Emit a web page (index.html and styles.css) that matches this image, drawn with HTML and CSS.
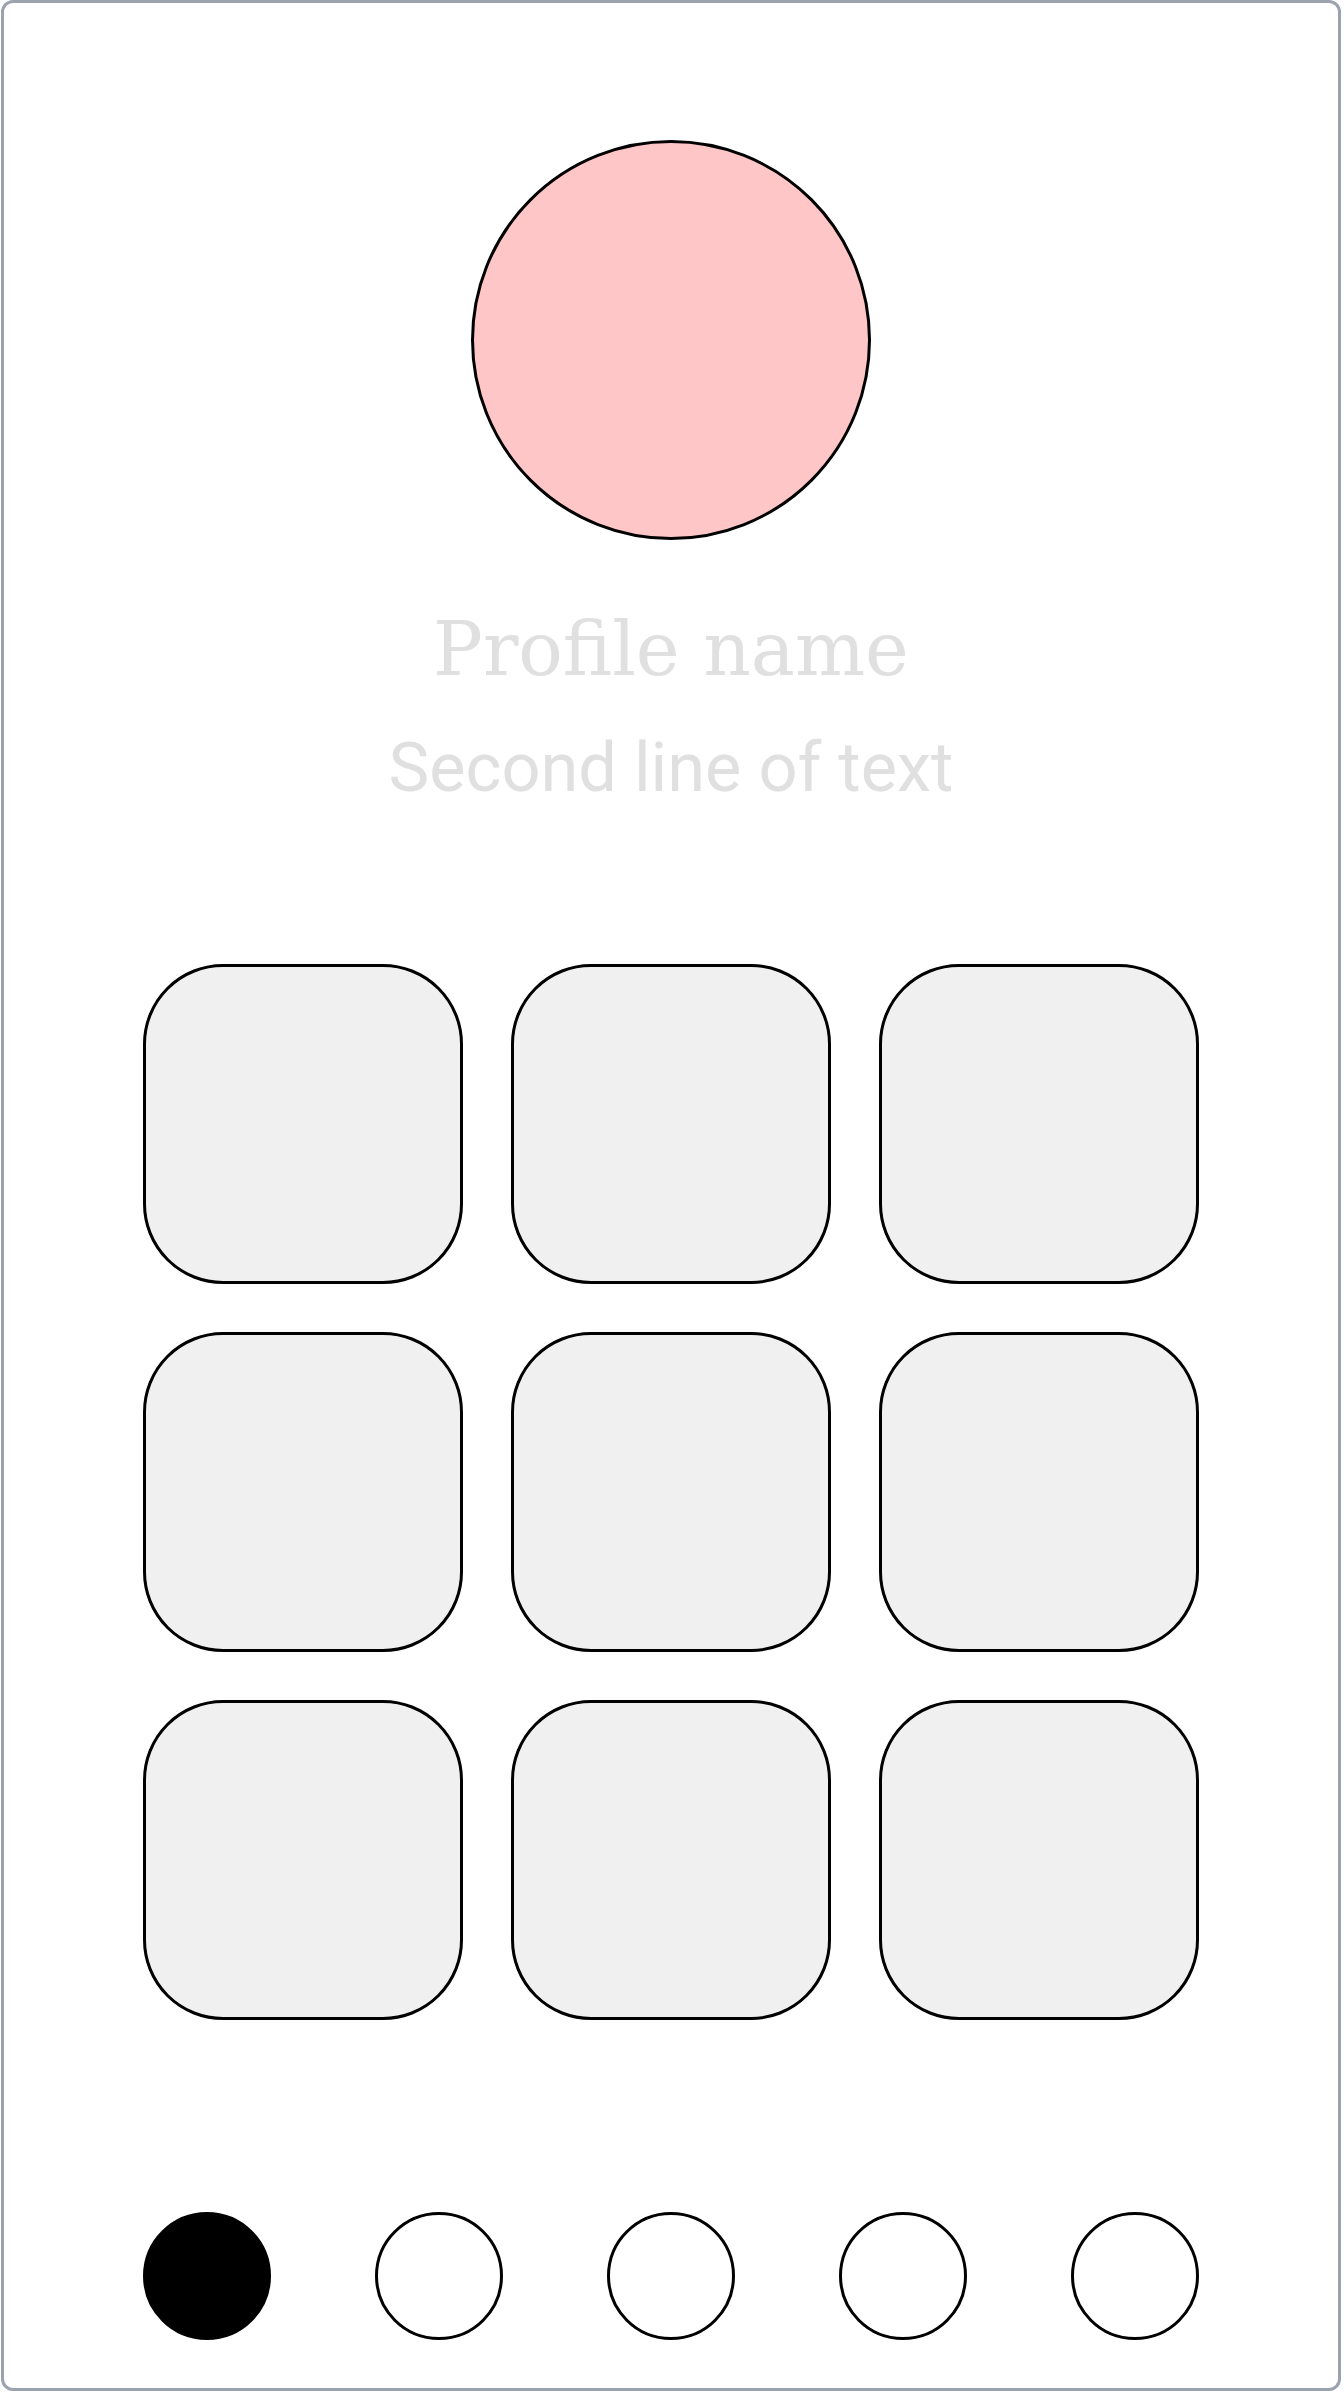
FILE: index.html
```html
<!DOCTYPE html>
<html lang="en">
<head>
  <meta charset="UTF-8">
  <meta name="viewport" content="width=device-width, initial-scale=1.0">
  <title>Profile</title>
  <link rel="stylesheet" href="styles.css">
</head>
<body>
  <div class="phone">
    <div class="avatar"></div>
    <h1 class="name">Profile name</h1>
    <p class="subtitle">Second line of text</p>

    <div class="tiles">
      <div class="tile"></div>
      <div class="tile"></div>
      <div class="tile"></div>
      <div class="tile"></div>
      <div class="tile"></div>
      <div class="tile"></div>
      <div class="tile"></div>
      <div class="tile"></div>
      <div class="tile"></div>
    </div>

    <div class="dots">
      <svg class="dot active" viewBox="0 0 128 128"><circle cx="64" cy="64" r="62.5"/></svg>
      <svg class="dot" viewBox="0 0 128 128"><circle cx="64" cy="64" r="62.5"/></svg>
      <svg class="dot" viewBox="0 0 128 128"><circle cx="64" cy="64" r="62.5"/></svg>
      <svg class="dot" viewBox="0 0 128 128"><circle cx="64" cy="64" r="62.5"/></svg>
      <svg class="dot" viewBox="0 0 128 128"><circle cx="64" cy="64" r="62.5"/></svg>
    </div>
  </div>
</body>
</html>
```

FILE: styles.css
```css
* {
  box-sizing: border-box;
}
body {
  margin: 0;
  padding: 0;
  background-color: white;
  font-family: Roboto, "Liberation Sans", sans-serif;
}
.phone {
  width: 1340px;
  height: 2391px;
  margin: 0 0 0 1px;
  border: 3px solid #9ca3af;
  border-radius: 12px;
  display: flex;
  flex-direction: column;
  align-items: center;
}
.avatar {
  width: 400px;
  height: 400px;
  margin-top: 137px;
  border: 3px solid black;
  border-radius: 50%;
  background-color: #ffc6c8;
}
.name {
  margin: 75px 0 0;
  font-family: "DejaVu Serif", "Liberation Serif", serif;
  font-weight: normal;
  font-size: 74px;
  line-height: 68px;
  color: #e0e0e0;
}
.subtitle {
  margin: 50px 0 0;
  font-size: 68.5px;
  line-height: 70px;
  color: #e0e0e0;
}
.tiles {
  display: grid;
  grid-template-columns: repeat(3, 320px);
  gap: 48px;
  margin-top: 161px;
}
.tile {
  height: 320px;
  border: 3px solid black;
  border-radius: 80px;
  background-color: #f0f0f0;
}
.dots {
  display: flex;
  gap: 104px;
  margin-top: 192px;
}
.dot {
  flex-shrink: 0;
  width: 128px;
  height: 128px;
}
.dot circle {
  fill: white;
  stroke: black;
  stroke-width: 3;
}
.dot.active circle {
  fill: black;
}
```
